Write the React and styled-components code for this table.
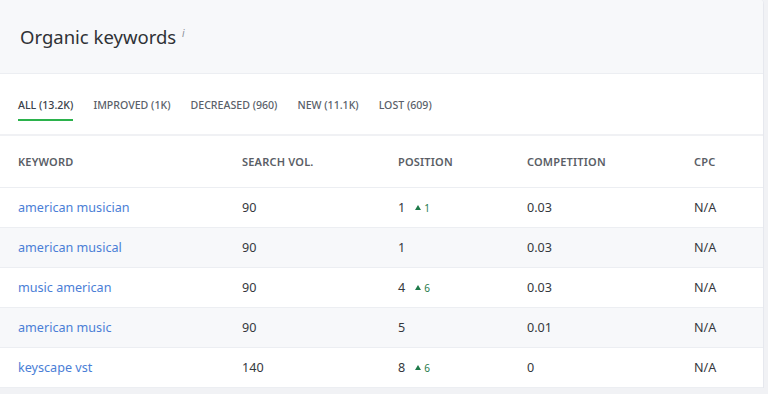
import React from "react";
import styled, { createGlobalStyle } from "styled-components";

const GlobalStyle = createGlobalStyle`
  body {
    margin: 0;
    background: #f1f2f5;
    font-family: "Noto Sans", "Open Sans", sans-serif;
  }
`;

const tabs = [
  { label: "ALL (13.2K)", active: true },
  { label: "IMPROVED (1K)" },
  { label: "DECREASED (960)" },
  { label: "NEW (11.1K)" },
  { label: "LOST (609)" },
];

const rows = [
  { keyword: "american musician", volume: "90", position: "1", change: "1", competition: "0.03", cpc: "N/A" },
  { keyword: "american musical", volume: "90", position: "1", competition: "0.03", cpc: "N/A" },
  { keyword: "music american", volume: "90", position: "4", change: "6", competition: "0.03", cpc: "N/A" },
  { keyword: "american music", volume: "90", position: "5", competition: "0.01", cpc: "N/A" },
  { keyword: "keyscape vst", volume: "140", position: "8", change: "6", competition: "0", cpc: "N/A" },
];

export default function App() {
  return (
    <>
      <GlobalStyle />
      <Card>
        <Header>
          <Title>
            Organic keywords <Info>i</Info>
          </Title>
        </Header>
        <Tabs>
          {tabs.map((tab) => (
            <Tab key={tab.label} $active={tab.active}>
              {tab.label}
            </Tab>
          ))}
        </Tabs>
        <Table>
          <HeadRow>
            <HeadCell>Keyword</HeadCell>
            <HeadCell>Search vol.</HeadCell>
            <HeadCell>Position</HeadCell>
            <HeadCell>Competition</HeadCell>
            <HeadCell>CPC</HeadCell>
          </HeadRow>
          {rows.map((row, i) => (
            <Row key={row.keyword} $striped={i % 2 === 1}>
              <KeywordLink>{row.keyword}</KeywordLink>
              <Cell>{row.volume}</Cell>
              <Cell>
                {row.position}
                {row.change && (
                  <Change>
                    <Arrow />
                    {row.change}
                  </Change>
                )}
              </Cell>
              <Cell>{row.competition}</Cell>
              <Cell>{row.cpc}</Cell>
            </Row>
          ))}
        </Table>
      </Card>
    </>
  );
}

const Card = styled.div`
  width: 763px;
  background: #ffffff;
  border-right: 1px solid #e6e8ee;
  border-top-right-radius: 4px;
  overflow: hidden;
`;

const Header = styled.div`
  height: 74px;
  background: #f7f8fa;
  border-bottom: 1px solid #eceef2;
  display: flex;
  align-items: center;
  padding: 0 20px;
  box-sizing: border-box;
`;

const Title = styled.h2`
  margin: 0;
  font-size: 18.5px;
  font-weight: 400;
  color: #2f3236;
  line-height: 1;
  padding-top: 2px;
`;

const Info = styled.sup`
  font-size: 10px;
  font-style: italic;
  color: #8a8f99;
  margin-left: 1px;
`;

const Tabs = styled.div`
  height: 62px;
  display: flex;
  align-items: flex-start;
  gap: 20px;
  padding: 0 18px;
  border-bottom: 2px solid #f0f1f4;
  box-sizing: border-box;
`;

const Tab = styled.div`
  margin-top: 24px;
  padding-bottom: 7px;
  font-size: 10.6px;
  font-weight: 500;
  color: ${(p) => (p.$active ? "#3a3f4a" : "#5a5f6a")};
  border-bottom: 2px solid ${(p) => (p.$active ? "#2bb24c" : "transparent")};
  white-space: nowrap;
`;

const Table = styled.div`
  display: flex;
  flex-direction: column;
`;

const HeadRow = styled.div`
  display: grid;
  grid-template-columns: 224px 156px 129px 167px 1fr;
  align-items: center;
  height: 51px;
  padding-left: 18px;
  border-bottom: 1px solid #eceef2;
`;

const HeadCell = styled.div`
  font-size: 11px;
  font-weight: 600;
  text-transform: uppercase;
  color: #5a5e66;
  letter-spacing: 0.2px;
`;

const Row = styled.div`
  display: grid;
  grid-template-columns: 224px 156px 129px 167px 1fr;
  align-items: center;
  height: 39px;
  padding-left: 18px;
  border-bottom: 1px solid #eceef2;
  background: ${(p) => (p.$striped ? "#f7f8fa" : "#ffffff")};
`;

const Cell = styled.div`
  font-size: 12.6px;
  color: #35383d;
  display: flex;
  align-items: center;
`;

const KeywordLink = styled.a`
  font-size: 12.6px;
  color: #4a7ed6;
  cursor: pointer;
`;

const Change = styled.span`
  display: inline-flex;
  align-items: center;
  margin-left: 10px;
  font-size: 10px;
  color: #1e7a4a;
`;

const Arrow = styled.span`
  width: 0;
  height: 0;
  border-left: 3px solid transparent;
  border-right: 3px solid transparent;
  border-bottom: 5px solid #1e7a4a;
  margin-right: 3px;
`;
